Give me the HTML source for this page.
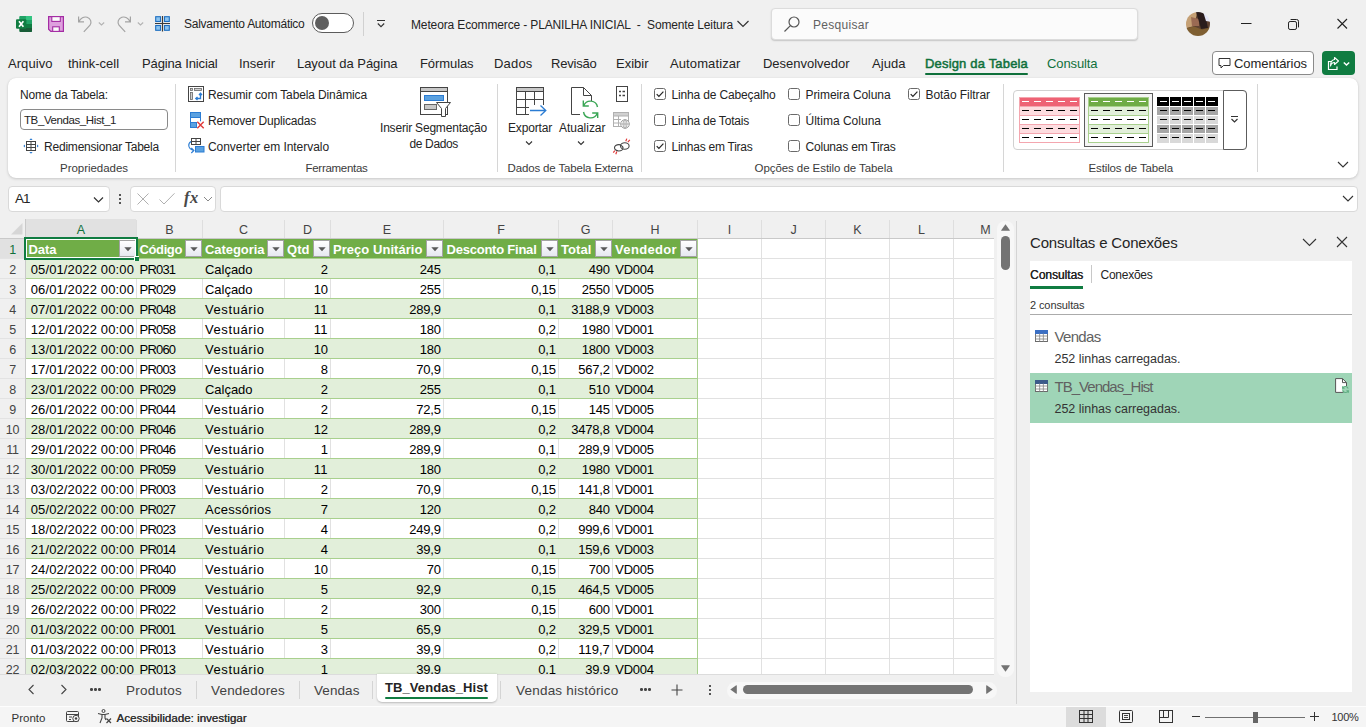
<!DOCTYPE html>
<html lang="pt-BR"><head><meta charset="utf-8"><title>Meteora Ecommerce - PLANILHA INICIAL - Excel</title>
<style>
html,body{margin:0;padding:0;}
body{width:1366px;height:727px;overflow:hidden;background:#f0f0f0;position:relative;font-family:"Liberation Sans",sans-serif;}
.t{position:absolute;white-space:nowrap;}
.b{position:absolute;box-sizing:border-box;}
svg{position:absolute;overflow:visible;}
body .t{-webkit-font-smoothing:auto;}
.c{font-family:"Liberation Sans",sans-serif;}
</style></head><body>
<svg style="left:16px;top:16px" width="16" height="16" viewBox="0 0 16 16">
<rect x="3.500" y="0" width="12.500" height="16" rx="1" fill="#21a366"/>
<rect x="9.700" y="0" width="6.300" height="4" fill="#33c481"/>
<path d="M3.500 1 Q3.500 0 4.500 0 H9.700 V4 H3.500 Z" fill="#21a366"/>
<rect x="9.700" y="4" width="6.300" height="4" fill="#21a366"/>
<rect x="3.500" y="4" width="6.200" height="4" fill="#107c41"/>
<rect x="9.700" y="8" width="6.300" height="4" fill="#107c41"/>
<rect x="3.500" y="8" width="6.200" height="4" fill="#185c37"/>
<path d="M3.500 12 H16 V15 Q16 16 15 16 H4.500 Q3.500 16 3.500 15 Z" fill="#185c37"/>
<rect x="0" y="3.200" width="10.400" height="9.600" rx="1" fill="#107c41"/>
<path d="M3 5.300 L7.400 10.700 M7.400 5.300 L3 10.700" stroke="#fff" stroke-width="1.700" fill="none"/>
</svg>
<svg style="left:48px;top:16px" width="16" height="16" viewBox="0 0 16 16">
<path d="M0.600 0.600 H15.400 V15.400 H2.800 L0.600 13.200 Z" fill="#dea0de" stroke="#a32ba3" stroke-width="1.200"/>
<rect x="3.800" y="0.600" width="8.500" height="4.800" fill="#fbfbfb" stroke="#a32ba3" stroke-width="1.100"/>
<rect x="4.700" y="10.800" width="6.600" height="4.600" fill="#fbfbfb" stroke="#a32ba3" stroke-width="1.100"/>
</svg>
<svg style="left:77px;top:15px" width="30" height="18" viewBox="0 0 30 18">
<path d="M1.600 1.500 V6.800 H7 M2 6.500 C3.500 3 7 1.300 10.200 2.300 C13.800 3.500 15 7.400 13 10.200 L6.800 16.800" fill="none" stroke="#a3a3a3" stroke-width="1.200"/>
<path d="M21.800 7.500 L24.500 10 L27.200 7.500" fill="none" stroke="#b3b3b3" stroke-width="1.100"/>
</svg>
<svg style="left:116px;top:15px" width="30" height="18" viewBox="0 0 30 18">
<path d="M14.400 1.500 V6.800 H9 M14 6.500 C12.500 3 9 1.300 5.800 2.300 C2.200 3.500 1 7.400 3 10.200 L9.200 16.800" fill="none" stroke="#a3a3a3" stroke-width="1.200"/>
<path d="M21.800 7.500 L24.500 10 L27.200 7.500" fill="none" stroke="#b3b3b3" stroke-width="1.100"/>
</svg>
<svg style="left:155px;top:16px" width="16" height="16" viewBox="0 0 16 16">
<g fill="#8cc4f0" stroke="#1e6fc0" stroke-width="1.100">
<rect x="0.700" y="0.700" width="4.800" height="4.800"/><rect x="9.500" y="0.700" width="4.800" height="4.800"/>
<rect x="0.700" y="9.500" width="4.800" height="4.800"/><rect x="9.500" y="9.500" width="4.800" height="4.800"/></g>
<path d="M7.500 0 V15.500 M0 7.500 H15" stroke="#3b3b3b" stroke-width="1.200"/>
</svg>
<div class="t " style="left:184px;top:15.84px;font-size:12px;line-height:16px;color:#242424;letter-spacing:-0.265px;">Salvamento Automático</div>
<div class="b" style="left:312px;top:13px;width:42px;height:20px;border:1.3px solid #5c5c5c;border-radius:10px;background:#fff;"></div>
<div class="b" style="left:315px;top:16px;width:14px;height:14px;border-radius:50%;background:#5f5f5f;"></div>
<div class="b" style="left:363px;top:12px;width:1px;height:24px;background:#d1d1d1;"></div>
<svg style="left:376px;top:19px" width="10" height="10" viewBox="0 0 10 10">
<path d="M1 1.5 H9 M1.8 4.5 L5 7.7 L8.2 4.5" fill="none" stroke="#333" stroke-width="1.1"/></svg>
<div class="t " style="left:411px;top:16.84px;font-size:12px;line-height:16px;color:#242424;letter-spacing:-0.137px;white-space:pre;">Meteora Ecommerce - PLANILHA INICIAL  -  Somente Leitura</div>
<svg style="left:736px;top:19px" width="14" height="10" viewBox="0 0 14 10">
<path d="M1.5 2 L7 7.5 L12.5 2" fill="none" stroke="#333" stroke-width="1.2"/></svg>
<div class="b" style="left:771px;top:8px;width:367px;height:32px;background:#fbfbfb;border:1px solid #dcdcdc;border-radius:4px;box-shadow:0 1px 1.5px rgba(0,0,0,.18);"></div>
<svg style="left:783px;top:15px" width="18" height="18" viewBox="0 0 18 18">
<circle cx="11" cy="7" r="5" fill="none" stroke="#555" stroke-width="1.2"/><path d="M7.4 10.6 L1.5 16.5" stroke="#555" stroke-width="1.2"/></svg>
<div class="t " style="left:813px;top:16.84px;font-size:12px;line-height:16px;color:#616161;letter-spacing:0.293px;">Pesquisar</div>
<svg style="left:1186px;top:12px" width="24" height="24" viewBox="0 0 24 24">
<defs><clipPath id="av"><circle cx="12" cy="12" r="12"/></clipPath><filter id="bl" x="-20%" y="-20%" width="140%" height="140%"><feGaussianBlur stdDeviation="0.6"/></filter></defs>
<g clip-path="url(#av)"><g filter="url(#bl)"><rect x="-3" y="-3" width="30" height="30" fill="#5f4330"/>
<path d="M-3 -3 H12 L8 14 L-3 17 Z" fill="#c5a074"/>
<path d="M5 5 L13 7 L13 14 L6 14 Z" fill="#9a6b52"/>
<path d="M9 -3 H18 L22 16 L15 17 L12.500 8 Z" fill="#2c1f1d"/>
<path d="M17.500 1 L26 1 L26 10 L20 9 Z" fill="#e4e6f6"/>
<path d="M-3 17 L8 14.500 L16 17.500 L27 15 V27 H-3 Z" fill="#7f5e30"/>
</g></g></svg>
<svg style="left:1238px;top:16px" width="112" height="16" viewBox="0 0 112 16">
<path d="M3 7.5 H13.5" stroke="#222" stroke-width="1"/>
<rect x="50.5" y="5.5" width="8" height="8" rx="1.6" fill="none" stroke="#222" stroke-width="1"/>
<path d="M52.6 3.5 H58.6 Q60.5 3.5 60.5 5.4 V11.4" fill="none" stroke="#222" stroke-width="1"/>
<path d="M99.5 3 L109 12.5 M109 3 L99.5 12.5" stroke="#222" stroke-width="1.1"/>
</svg>
<div class="t " style="left:8px;top:54.5px;font-size:13px;line-height:18px;color:#242424;letter-spacing:0.061px;">Arquivo</div>
<div class="t " style="left:68px;top:54.5px;font-size:13px;line-height:18px;color:#242424;letter-spacing:-0.029px;">think-cell</div>
<div class="t " style="left:142px;top:54.5px;font-size:13px;line-height:18px;color:#242424;letter-spacing:-0.130px;">Página Inicial</div>
<div class="t " style="left:239px;top:54.5px;font-size:13px;line-height:18px;color:#242424;letter-spacing:-0.017px;">Inserir</div>
<div class="t " style="left:297px;top:54.5px;font-size:13px;line-height:18px;color:#242424;letter-spacing:-0.043px;">Layout da Página</div>
<div class="t " style="left:420px;top:54.5px;font-size:13px;line-height:18px;color:#242424;letter-spacing:-0.084px;">Fórmulas</div>
<div class="t " style="left:494px;top:54.5px;font-size:13px;line-height:18px;color:#242424;letter-spacing:0.185px;">Dados</div>
<div class="t " style="left:551px;top:54.5px;font-size:13px;line-height:18px;color:#242424;letter-spacing:-0.209px;">Revisão</div>
<div class="t " style="left:616px;top:54.5px;font-size:13px;line-height:18px;color:#242424;letter-spacing:-0.001px;">Exibir</div>
<div class="t " style="left:670px;top:54.5px;font-size:13px;line-height:18px;color:#242424;letter-spacing:0.104px;">Automatizar</div>
<div class="t " style="left:763px;top:54.5px;font-size:13px;line-height:18px;color:#242424;letter-spacing:-0.016px;">Desenvolvedor</div>
<div class="t " style="left:872px;top:54.5px;font-size:13px;line-height:18px;color:#242424;letter-spacing:0.050px;">Ajuda</div>
<div class="t " style="left:925px;top:54.5px;font-size:13px;line-height:18px;color:#0f703b;letter-spacing:0.174px;-webkit-text-stroke:0.5px #0f703b;">Design da Tabela</div>
<div class="b" style="left:925px;top:73px;width:103px;height:2px;background:#0f703b;border-radius:1px;"></div>
<div class="t " style="left:1047px;top:54.5px;font-size:13px;line-height:18px;color:#0f703b;letter-spacing:-0.101px;">Consulta</div>
<div class="b" style="left:1212px;top:51px;width:101.5px;height:24px;background:#fff;border:1px solid #8a8a8a;border-radius:4px;"></div>
<svg style="left:1218px;top:57px" width="13" height="13" viewBox="0 0 13 13">
<path d="M1 1.5 H12 V8.5 H5.5 L3 11 V8.5 H1 Z" fill="none" stroke="#333" stroke-width="1"/></svg>
<div class="t " style="left:1234px;top:54.5px;font-size:13px;line-height:18px;color:#242424;letter-spacing:-0.063px;">Comentários</div>
<div class="b" style="left:1322px;top:51px;width:32.5px;height:24px;background:#107c41;border-radius:4px;"></div>
<svg style="left:1327px;top:56px" width="24" height="15" viewBox="0 0 24 15">
<path d="M4 5.500 H1.500 V13.500 H10 V10.500" fill="none" stroke="#fff" stroke-width="1.200"/>
<path d="M7.500 1.500 L11.500 5 L7.500 8.500 V6.500 Q4.500 6.500 3.500 10 Q3.500 4 7.500 3.500 Z" fill="none" stroke="#fff" stroke-width="1.100" stroke-linejoin="round"/>
<path d="M16.800 6.500 L19.500 9 L22.200 6.500" fill="none" stroke="#fff" stroke-width="1.500"/></svg>
<div class="b" style="left:8px;top:78px;width:1350px;height:100px;background:#fff;border-radius:8px;box-shadow:0 1px 3px rgba(0,0,0,.16),0 0 1px rgba(0,0,0,.10);"></div>
<div class="b" style="left:175px;top:84px;width:1px;height:88px;background:#d6d6d6;"></div>
<div class="b" style="left:497px;top:84px;width:1px;height:88px;background:#d6d6d6;"></div>
<div class="b" style="left:641px;top:84px;width:1px;height:88px;background:#d6d6d6;"></div>
<div class="b" style="left:1003px;top:84px;width:1px;height:88px;background:#d6d6d6;"></div>
<div class="b" style="left:1257px;top:84px;width:1px;height:88px;background:#d6d6d6;"></div>
<div class="t " style="left:20px;top:86.84px;font-size:12px;line-height:16px;color:#242424;letter-spacing:-0.166px;">Nome da Tabela:</div>
<div class="b" style="left:20px;top:109px;width:148px;height:21px;background:#fff;border:1px solid #8a8a8a;border-radius:4px;"></div>
<div class="t " style="left:24px;top:112.02px;font-size:11.5px;line-height:16px;color:#242424;letter-spacing:-0.403px;">TB_Vendas_Hist_1</div>
<svg style="left:23px;top:138px" width="16" height="16" viewBox="0 0 16 16">
<rect x="3.5" y="3.5" width="9" height="9" fill="#fff" stroke="#444" stroke-width="1"/>
<path d="M3.5 6.5 H12.5 M3.5 9.5 H12.5 M8 3.5 V12.5" stroke="#444" stroke-width="1"/>
<path d="M8 0.3 L9.6 2 H6.4 Z M8 15.7 L9.6 14 H6.4 Z M0.3 8 L2 6.4 V9.6 Z M15.7 8 L14 6.4 V9.6 Z" fill="#2b7cd3"/>
</svg>
<div class="t " style="left:44px;top:138.84px;font-size:12px;line-height:16px;color:#242424;letter-spacing:-0.209px;">Redimensionar Tabela</div>
<div class="t " style="left:60px;top:159.52px;font-size:11.5px;line-height:16px;color:#3b3b3b;letter-spacing:-0.033px;">Propriedades</div>
<svg style="left:188px;top:86px" width="16" height="16" viewBox="0 0 16 16">
<rect x="0.5" y="0.5" width="15" height="15" fill="#fff" stroke="#444"/>
<rect x="2.500" y="2.500" width="2" height="2" fill="#d0d0d0" stroke="#666" stroke-width="0.8"/>
<rect x="6.500" y="2.500" width="7" height="2" fill="#d0d0d0" stroke="#666" stroke-width="0.8"/>
<rect x="2.500" y="6.500" width="2" height="7" fill="#d0d0d0" stroke="#666" stroke-width="0.8"/>
<path d="M8 12.500 H12.500 V7.500 M11 9 L12.500 7.300 L14 9 M9.500 11 L7.800 12.500 L9.500 14" fill="none" stroke="#2b7cd3" stroke-width="1.300"/>
</svg>
<div class="t " style="left:208px;top:86.84px;font-size:12px;line-height:16px;color:#242424;letter-spacing:-0.129px;">Resumir com Tabela Dinâmica</div>
<svg style="left:189px;top:112px" width="17" height="17" viewBox="0 0 17 17">
<rect x="1.500" y="0.500" width="10" height="15" fill="#fff" stroke="#2b7cd3"/>
<rect x="1.500" y="0.500" width="10" height="5" fill="#5ba1e0" stroke="#2b7cd3"/>
<rect x="1.500" y="10.500" width="6" height="5" fill="#5ba1e0" stroke="#2b7cd3"/>
<rect x="8" y="9.300" width="5" height="7.500" fill="#fff"/>
<path d="M8.300 9.800 L14.700 16.200 M14.700 9.800 L8.300 16.200" stroke="#e03a3a" stroke-width="1.400"/>
</svg>
<div class="t " style="left:208px;top:112.84px;font-size:12px;line-height:16px;color:#242424;letter-spacing:-0.188px;">Remover Duplicadas</div>
<svg style="left:188px;top:138px" width="17" height="17" viewBox="0 0 17 17">
<rect x="3.500" y="0.500" width="9" height="6" fill="#fff" stroke="#444"/>
<path d="M3.500 3.500 H12.500 M8 0.500 V6.500" stroke="#444"/>
<rect x="7.500" y="8.500" width="8.500" height="5.500" fill="#5ba1e0" stroke="#2b7cd3"/>
<path d="M3 3.500 C-0.300 5.500 -0.300 10.500 5.300 12.400 M3.300 10 L5.900 12.500 L3.300 15" fill="none" stroke="#2b7cd3" stroke-width="1.100"/>
</svg>
<div class="t " style="left:208px;top:138.84px;font-size:12px;line-height:16px;color:#242424;letter-spacing:-0.047px;">Converter em Intervalo</div>
<div class="t " style="left:305.5px;top:159.52px;font-size:11.5px;line-height:16px;color:#3b3b3b;letter-spacing:-0.289px;">Ferramentas</div>
<svg style="left:419px;top:86px" width="32" height="32" viewBox="0 0 32 32">
<rect x="1.5" y="1.5" width="27" height="27" fill="#fff" stroke="#444"/>
<rect x="1.5" y="1.5" width="27" height="4" fill="#c8c8c8" stroke="#444"/>
<rect x="5.500" y="9.500" width="19" height="5" fill="#5ba1e0" stroke="#2b7cd3"/>
<rect x="5.500" y="18.500" width="12" height="5" fill="#c8c8c8" stroke="#666"/>
<path d="M17.500 16.500 H31.500 L26.500 22.500 V30.500 L22.500 30.500 V22.500 Z" fill="#fff" stroke="#444"/>
</svg>
<div class="t " style="left:380px;top:119.84px;font-size:12px;line-height:16px;color:#242424;letter-spacing:-0.196px;">Inserir Segmentação</div>
<div class="t " style="left:409.5px;top:135.84px;font-size:12px;line-height:16px;color:#242424;letter-spacing:-0.358px;">de Dados</div>
<svg style="left:514px;top:86px" width="34" height="32" viewBox="0 0 34 32">
<rect x="2.500" y="1.500" width="27" height="27" fill="#fff" stroke="#444"/>
<rect x="2.500" y="1.500" width="27" height="4" fill="#c8c8c8" stroke="#444"/>
<path d="M2.500 13.500 H29.500 M2.500 21.500 H29.500 M11.500 5.500 V28.500 M20.500 5.500 V28.500" stroke="#444"/>
<rect x="15" y="19" width="19" height="12" fill="#fff"/>
<path d="M16 24.500 H31.500 M26.500 19.500 L31.800 24.500 L26.500 29.500" fill="none" stroke="#2b7cd3" stroke-width="1.3"/>
</svg>
<div class="t " style="left:508px;top:119.84px;font-size:12px;line-height:16px;color:#242424;letter-spacing:-0.169px;">Exportar</div>
<svg style="left:525px;top:140px" width="8" height="6" viewBox="0 0 8 6"><path d="M1 1.5 L4 4.5 L7 1.5" fill="none" stroke="#333" stroke-width="1.1"/></svg>
<svg style="left:569px;top:86px" width="32" height="32" viewBox="0 0 32 32">
<path d="M2.500 1.500 H14.500 L22.500 9.500 V15 M2.500 1.500 V28.500 H11" fill="none" stroke="#444"/>
<path d="M14.500 1.500 V9.500 H22.500" fill="none" stroke="#444"/>
<path d="M28.500 21 A7.200 7.200 0 0 0 14.800 19.500 M14.300 14.500 V20 H19.800 M14.500 26 A7.200 7.200 0 0 0 28.200 27.500 M28.700 32 V27 H23.200" fill="none" stroke="#3aa655" stroke-width="1.400"/>
</svg>
<div class="t " style="left:559px;top:119.84px;font-size:12px;line-height:16px;color:#242424;letter-spacing:-0.021px;">Atualizar</div>
<svg style="left:577px;top:140px" width="8" height="6" viewBox="0 0 8 6"><path d="M1 1.5 L4 4.5 L7 1.5" fill="none" stroke="#333" stroke-width="1.1"/></svg>
<svg style="left:614px;top:86px" width="16" height="16" viewBox="0 0 16 16">
<rect x="2.5" y="0.5" width="11" height="15" fill="#fff" stroke="#444"/>
<path d="M5 5.500 H7 M8.500 5.500 H11 M5 9.500 H7 M8.500 9.500 H11" stroke="#444" stroke-width="1.6"/></svg>
<svg style="left:613px;top:112px" width="17" height="17" viewBox="0 0 17 17">
<rect x="0.500" y="0.500" width="15" height="14" fill="#fff" stroke="#b0b0b0"/>
<rect x="0.5" y="0.5" width="15" height="3.500" fill="#d0d0d0" stroke="#b0b0b0"/>
<path d="M0.500 7.500 H8 M0.500 11 H7 M5.500 4 V14.500" stroke="#b0b0b0"/>
<circle cx="12" cy="12" r="4.3" fill="#fff" stroke="#a0a0a0"/><path d="M7.700 12 H16.300 M12 7.700 V16.300" stroke="#a0a0a0" stroke-width="0.8"/><ellipse cx="12" cy="12" rx="2" ry="4.300" fill="none" stroke="#a0a0a0" stroke-width="0.8"/></svg>
<svg style="left:613px;top:138px" width="18" height="17" viewBox="0 0 18 17">
<ellipse cx="5.800" cy="9.800" rx="4.300" ry="3.200" fill="none" stroke="#444" stroke-width="1.1"/>
<ellipse cx="11.800" cy="8" rx="4.300" ry="3.200" fill="#fff" stroke="#444" stroke-width="1.1"/>
<path d="M7.500 7.200 A4.300 3.200 0 0 1 10 10.500" fill="none" stroke="#444" stroke-width="1.1"/>
<path d="M12.800 3.300 L13.800 0.600 M14.800 4.200 L16.800 1.800 M3.800 13.500 L2.800 16.200 M1.800 12.600 L0.300 14.600" stroke="#e03a3a" stroke-width="1.200"/></svg>
<div class="t " style="left:507.5px;top:159.52px;font-size:11.5px;line-height:16px;color:#3b3b3b;letter-spacing:-0.149px;">Dados de Tabela Externa</div>
<div class="b" style="left:653.5px;top:87.7px;width:12.7px;height:12.7px;background:#fff;border:1px solid #6a6a6a;border-radius:2.5px;"></div>
<svg style="left:654px;top:88px" width="12" height="12" viewBox="0 0 12 12"><path d="M2.7 6.2 L4.9 8.4 L9.4 3.6" fill="none" stroke="#242424" stroke-width="1.2"/></svg>
<div class="t " style="left:671.5px;top:86.84px;font-size:12px;line-height:16px;color:#242424;letter-spacing:-0.152px;">Linha de Cabeçalho</div>
<div class="b" style="left:653.5px;top:113.7px;width:12.7px;height:12.7px;background:#fff;border:1px solid #6a6a6a;border-radius:2.5px;"></div>
<div class="t " style="left:671.5px;top:112.84px;font-size:12px;line-height:16px;color:#242424;letter-spacing:-0.200px;">Linha de Totais</div>
<div class="b" style="left:653.5px;top:139.7px;width:12.7px;height:12.7px;background:#fff;border:1px solid #6a6a6a;border-radius:2.5px;"></div>
<svg style="left:654px;top:140px" width="12" height="12" viewBox="0 0 12 12"><path d="M2.7 6.2 L4.9 8.4 L9.4 3.6" fill="none" stroke="#242424" stroke-width="1.2"/></svg>
<div class="t " style="left:671.5px;top:138.84px;font-size:12px;line-height:16px;color:#242424;letter-spacing:-0.247px;">Linhas em Tiras</div>
<div class="b" style="left:787.5px;top:87.7px;width:12.7px;height:12.7px;background:#fff;border:1px solid #6a6a6a;border-radius:2.5px;"></div>
<div class="t " style="left:805.5px;top:86.84px;font-size:12px;line-height:16px;color:#242424;letter-spacing:-0.069px;">Primeira Coluna</div>
<div class="b" style="left:787.5px;top:113.7px;width:12.7px;height:12.7px;background:#fff;border:1px solid #6a6a6a;border-radius:2.5px;"></div>
<div class="t " style="left:805.5px;top:112.84px;font-size:12px;line-height:16px;color:#242424;letter-spacing:0.011px;">Última Coluna</div>
<div class="b" style="left:787.5px;top:139.7px;width:12.7px;height:12.7px;background:#fff;border:1px solid #6a6a6a;border-radius:2.5px;"></div>
<div class="t " style="left:805.5px;top:138.84px;font-size:12px;line-height:16px;color:#242424;letter-spacing:-0.210px;">Colunas em Tiras</div>
<div class="b" style="left:907.5px;top:87.7px;width:12.7px;height:12.7px;background:#fff;border:1px solid #6a6a6a;border-radius:2.5px;"></div>
<svg style="left:908px;top:88px" width="12" height="12" viewBox="0 0 12 12"><path d="M2.7 6.2 L4.9 8.4 L9.4 3.6" fill="none" stroke="#242424" stroke-width="1.2"/></svg>
<div class="t " style="left:925.5px;top:86.84px;font-size:12px;line-height:16px;color:#242424;letter-spacing:-0.065px;">Botão Filtrar</div>
<div class="t " style="left:754.5px;top:159.52px;font-size:11.5px;line-height:16px;color:#3b3b3b;letter-spacing:-0.069px;">Opções de Estilo de Tabela</div>
<div class="b" style="left:1013px;top:90px;width:234px;height:60px;background:#fff;border:1px solid #d1d1d1;border-radius:4px;"></div>
<div class="b" style="left:1223px;top:90px;width:24px;height:60px;background:#fff;border:1px solid #5c5c5c;border-radius:0 4px 4px 0;"></div>
<svg style="left:1230px;top:115px" width="9" height="9" viewBox="0 0 9 9"><path d="M1 1.500 H8 M1.500 4 L4.500 7 L7.500 4" fill="none" stroke="#333" stroke-width="1.2"/></svg>
<svg style="left:1019px;top:97px" width="61" height="46" viewBox="0 0 61 46" shape-rendering="crispEdges"><rect x="0" y="0" width="61" height="9" fill="#ee6274"/><rect x="0" y="9" width="61" height="9" fill="#fddde0"/><rect x="0" y="18" width="61" height="9" fill="#ffffff"/><rect x="0" y="27" width="61" height="9" fill="#fddde0"/><rect x="0" y="36" width="61" height="10" fill="#ffffff"/><rect x="0" y="9" width="61" height="1" fill="#f4a6af"/><rect x="0" y="18" width="61" height="1" fill="#f4a6af"/><rect x="0" y="27" width="61" height="1" fill="#f4a6af"/><rect x="0" y="36" width="61" height="1" fill="#f4a6af"/><rect x="0" y="0" width="61" height="1" fill="#f4a6af"/><rect x="0" y="45" width="61" height="1" fill="#f4a6af"/><rect x="0" y="0" width="1" height="46" fill="#f4a6af"/><rect x="60" y="0" width="1" height="46" fill="#f4a6af"/><rect x="3" y="4" width="7" height="1" fill="#fff"/><rect x="15" y="4" width="7" height="1" fill="#fff"/><rect x="27" y="4" width="7" height="1" fill="#fff"/><rect x="39" y="4" width="7" height="1" fill="#fff"/><rect x="51" y="4" width="7" height="1" fill="#fff"/><rect x="3" y="13" width="7" height="1" fill="#000"/><rect x="15" y="13" width="7" height="1" fill="#000"/><rect x="27" y="13" width="7" height="1" fill="#000"/><rect x="39" y="13" width="7" height="1" fill="#000"/><rect x="51" y="13" width="7" height="1" fill="#000"/><rect x="3" y="22" width="7" height="1" fill="#000"/><rect x="15" y="22" width="7" height="1" fill="#000"/><rect x="27" y="22" width="7" height="1" fill="#000"/><rect x="39" y="22" width="7" height="1" fill="#000"/><rect x="51" y="22" width="7" height="1" fill="#000"/><rect x="3" y="31" width="7" height="1" fill="#000"/><rect x="15" y="31" width="7" height="1" fill="#000"/><rect x="27" y="31" width="7" height="1" fill="#000"/><rect x="39" y="31" width="7" height="1" fill="#000"/><rect x="51" y="31" width="7" height="1" fill="#000"/><rect x="3" y="40" width="7" height="1" fill="#000"/><rect x="15" y="40" width="7" height="1" fill="#000"/><rect x="27" y="40" width="7" height="1" fill="#000"/><rect x="39" y="40" width="7" height="1" fill="#000"/><rect x="51" y="40" width="7" height="1" fill="#000"/></svg>
<div class="b" style="left:1084px;top:93px;width:69px;height:54px;background:#f5f5f5;border:1px solid #5c5c5c;"></div>
<svg style="left:1088px;top:97px" width="61" height="46" viewBox="0 0 61 46" shape-rendering="crispEdges"><rect x="0" y="0" width="61" height="9" fill="#6fac46"/><rect x="0" y="9" width="61" height="9" fill="#e2efda"/><rect x="0" y="18" width="61" height="9" fill="#ffffff"/><rect x="0" y="27" width="61" height="9" fill="#e2efda"/><rect x="0" y="36" width="61" height="10" fill="#ffffff"/><rect x="0" y="9" width="61" height="1" fill="#a9d08e"/><rect x="0" y="18" width="61" height="1" fill="#a9d08e"/><rect x="0" y="27" width="61" height="1" fill="#a9d08e"/><rect x="0" y="36" width="61" height="1" fill="#a9d08e"/><rect x="0" y="0" width="61" height="1" fill="#a9d08e"/><rect x="0" y="45" width="61" height="1" fill="#a9d08e"/><rect x="0" y="0" width="1" height="46" fill="#a9d08e"/><rect x="60" y="0" width="1" height="46" fill="#a9d08e"/><rect x="3" y="4" width="7" height="1" fill="#fff"/><rect x="15" y="4" width="7" height="1" fill="#fff"/><rect x="27" y="4" width="7" height="1" fill="#fff"/><rect x="39" y="4" width="7" height="1" fill="#fff"/><rect x="51" y="4" width="7" height="1" fill="#fff"/><rect x="3" y="13" width="7" height="1" fill="#000"/><rect x="15" y="13" width="7" height="1" fill="#000"/><rect x="27" y="13" width="7" height="1" fill="#000"/><rect x="39" y="13" width="7" height="1" fill="#000"/><rect x="51" y="13" width="7" height="1" fill="#000"/><rect x="3" y="22" width="7" height="1" fill="#000"/><rect x="15" y="22" width="7" height="1" fill="#000"/><rect x="27" y="22" width="7" height="1" fill="#000"/><rect x="39" y="22" width="7" height="1" fill="#000"/><rect x="51" y="22" width="7" height="1" fill="#000"/><rect x="3" y="31" width="7" height="1" fill="#000"/><rect x="15" y="31" width="7" height="1" fill="#000"/><rect x="27" y="31" width="7" height="1" fill="#000"/><rect x="39" y="31" width="7" height="1" fill="#000"/><rect x="51" y="31" width="7" height="1" fill="#000"/><rect x="3" y="40" width="7" height="1" fill="#000"/><rect x="15" y="40" width="7" height="1" fill="#000"/><rect x="27" y="40" width="7" height="1" fill="#000"/><rect x="39" y="40" width="7" height="1" fill="#000"/><rect x="51" y="40" width="7" height="1" fill="#000"/></svg>
<svg style="left:1157px;top:97px" width="61" height="46" viewBox="0 0 61 46" shape-rendering="crispEdges"><rect x="0" y="0" width="61" height="9" fill="#000000"/><rect x="0" y="9" width="61" height="9" fill="#a6a6a6"/><rect x="0" y="18" width="61" height="9" fill="#d9d9d9"/><rect x="0" y="27" width="61" height="9" fill="#a6a6a6"/><rect x="0" y="36" width="61" height="10" fill="#d9d9d9"/><rect x="0" y="9" width="61" height="1" fill="#fff"/><rect x="0" y="18" width="61" height="1" fill="#fff"/><rect x="0" y="27" width="61" height="1" fill="#fff"/><rect x="0" y="36" width="61" height="1" fill="#fff"/><rect x="12" y="0" width="1" height="46" fill="#fff"/><rect x="24" y="0" width="1" height="46" fill="#fff"/><rect x="36" y="0" width="1" height="46" fill="#fff"/><rect x="48" y="0" width="1" height="46" fill="#fff"/><rect x="3" y="4" width="7" height="1" fill="#fff"/><rect x="15" y="4" width="7" height="1" fill="#fff"/><rect x="27" y="4" width="7" height="1" fill="#fff"/><rect x="39" y="4" width="7" height="1" fill="#fff"/><rect x="51" y="4" width="7" height="1" fill="#fff"/><rect x="3" y="13" width="7" height="1" fill="#000"/><rect x="15" y="13" width="7" height="1" fill="#000"/><rect x="27" y="13" width="7" height="1" fill="#000"/><rect x="39" y="13" width="7" height="1" fill="#000"/><rect x="51" y="13" width="7" height="1" fill="#000"/><rect x="3" y="22" width="7" height="1" fill="#000"/><rect x="15" y="22" width="7" height="1" fill="#000"/><rect x="27" y="22" width="7" height="1" fill="#000"/><rect x="39" y="22" width="7" height="1" fill="#000"/><rect x="51" y="22" width="7" height="1" fill="#000"/><rect x="3" y="31" width="7" height="1" fill="#000"/><rect x="15" y="31" width="7" height="1" fill="#000"/><rect x="27" y="31" width="7" height="1" fill="#000"/><rect x="39" y="31" width="7" height="1" fill="#000"/><rect x="51" y="31" width="7" height="1" fill="#000"/><rect x="3" y="40" width="7" height="1" fill="#000"/><rect x="15" y="40" width="7" height="1" fill="#000"/><rect x="27" y="40" width="7" height="1" fill="#000"/><rect x="39" y="40" width="7" height="1" fill="#000"/><rect x="51" y="40" width="7" height="1" fill="#000"/></svg>
<div class="t " style="left:1088.5px;top:159.52px;font-size:11.5px;line-height:16px;color:#3b3b3b;letter-spacing:-0.131px;">Estilos de Tabela</div>
<svg style="left:1337px;top:160px" width="12" height="9" viewBox="0 0 12 9"><path d="M1 2 L6 7 L11 2" fill="none" stroke="#333" stroke-width="1.1"/></svg>
<div class="b" style="left:8px;top:186px;width:102px;height:26px;background:#fff;border:1px solid #d9d9d9;border-radius:4px;"></div>
<div class="t " style="left:15px;top:190.32px;font-size:13.5px;line-height:18px;color:#242424;letter-spacing:-1.006px;">A1</div>
<svg style="left:93px;top:196px" width="11" height="8" viewBox="0 0 11 8"><path d="M1 1.500 L5.500 6 L10 1.500" fill="none" stroke="#333" stroke-width="1.2"/></svg>
<div class="b" style="left:118.7px;top:193.5px;width:2.5px;height:2.5px;background:#222;border-radius:1px;"></div>
<div class="b" style="left:118.7px;top:197.6px;width:2.5px;height:2.5px;background:#222;border-radius:1px;"></div>
<div class="b" style="left:118.7px;top:201.7px;width:2.5px;height:2.5px;background:#222;border-radius:1px;"></div>
<div class="b" style="left:130px;top:186px;width:86px;height:26px;background:#fff;border:1px solid #d9d9d9;border-radius:4px;"></div>
<svg style="left:136px;top:192px" width="80" height="14" viewBox="0 0 80 14">
<path d="M1.500 1.500 L12.500 12.500 M12.500 1.500 L1.500 12.500" stroke="#b0b0b0" stroke-width="1"/>
<path d="M23.500 7.500 L28 12 L38.500 1.300" fill="none" stroke="#b0b0b0" stroke-width="1"/>
<path d="M68 5 L72 9 L76 5" fill="none" stroke="#888" stroke-width="1"/></svg>
<div class="t" style="left:184px;top:188.300px;font-family:'Liberation Serif',serif;font-style:italic;font-weight:bold;font-size:16.500px;line-height:20px;color:#484848;letter-spacing:0.4px;">fx</div>
<div class="b" style="left:220px;top:186px;width:1138px;height:26px;background:#fff;border:1px solid #d9d9d9;border-radius:4px;"></div>
<svg style="left:1342px;top:194px" width="12" height="9" viewBox="0 0 12 9"><path d="M1 2 L6 7 L11 2" fill="none" stroke="#333" stroke-width="1.1"/></svg>
<div class="b" style="left:0px;top:219px;width:994px;height:459px;background:#fff;"></div>
<div class="b" style="left:0px;top:219px;width:994px;height:19px;background:#f0f0f0;"></div>
<div class="b" style="left:26px;top:219px;width:110px;height:19px;background:#e1e1e1;"></div>
<div class="b" style="left:0px;top:238px;width:994px;height:1px;background:#c9c9c9;"></div>
<div class="b" style="left:0px;top:239px;width:25px;height:439px;background:#f0f0f0;"></div>
<div class="b" style="left:0px;top:239px;width:25px;height:19px;background:#e1e1e1;"></div>
<div class="b" style="left:25px;top:219px;width:1px;height:459px;background:#c9c9c9;"></div>
<svg style="left:11px;top:223px" width="12" height="12" viewBox="0 0 12 12"><path d="M11.500 0 V11.500 H0 Z" fill="#d6d6d6"/></svg>
<div class="b" style="left:136px;top:220px;width:1px;height:18px;background:#dedede;"></div>
<div class="b" style="left:202px;top:220px;width:1px;height:18px;background:#dedede;"></div>
<div class="b" style="left:284px;top:220px;width:1px;height:18px;background:#dedede;"></div>
<div class="b" style="left:330px;top:220px;width:1px;height:18px;background:#dedede;"></div>
<div class="b" style="left:443px;top:220px;width:1px;height:18px;background:#dedede;"></div>
<div class="b" style="left:558px;top:220px;width:1px;height:18px;background:#dedede;"></div>
<div class="b" style="left:612px;top:220px;width:1px;height:18px;background:#dedede;"></div>
<div class="b" style="left:697px;top:220px;width:1px;height:18px;background:#dedede;"></div>
<div class="b" style="left:761px;top:220px;width:1px;height:18px;background:#dedede;"></div>
<div class="b" style="left:825px;top:220px;width:1px;height:18px;background:#dedede;"></div>
<div class="b" style="left:889px;top:220px;width:1px;height:18px;background:#dedede;"></div>
<div class="b" style="left:953px;top:220px;width:1px;height:18px;background:#dedede;"></div>
<div class="b" style="left:136px;top:239px;width:1px;height:439px;background:#e1e1e1;"></div>
<div class="b" style="left:202px;top:239px;width:1px;height:439px;background:#e1e1e1;"></div>
<div class="b" style="left:284px;top:239px;width:1px;height:439px;background:#e1e1e1;"></div>
<div class="b" style="left:330px;top:239px;width:1px;height:439px;background:#e1e1e1;"></div>
<div class="b" style="left:443px;top:239px;width:1px;height:439px;background:#e1e1e1;"></div>
<div class="b" style="left:558px;top:239px;width:1px;height:439px;background:#e1e1e1;"></div>
<div class="b" style="left:612px;top:239px;width:1px;height:439px;background:#e1e1e1;"></div>
<div class="b" style="left:697px;top:239px;width:1px;height:439px;background:#e1e1e1;"></div>
<div class="b" style="left:761px;top:239px;width:1px;height:439px;background:#e1e1e1;"></div>
<div class="b" style="left:825px;top:239px;width:1px;height:439px;background:#e1e1e1;"></div>
<div class="b" style="left:889px;top:239px;width:1px;height:439px;background:#e1e1e1;"></div>
<div class="b" style="left:953px;top:239px;width:1px;height:439px;background:#e1e1e1;"></div>
<div class="b" style="left:26px;top:258px;width:968px;height:1px;background:#e1e1e1;"></div>
<div class="b" style="left:0px;top:258px;width:25px;height:1px;background:#e3e3e3;"></div>
<div class="b" style="left:26px;top:278px;width:968px;height:1px;background:#e1e1e1;"></div>
<div class="b" style="left:0px;top:278px;width:25px;height:1px;background:#e3e3e3;"></div>
<div class="b" style="left:26px;top:298px;width:968px;height:1px;background:#e1e1e1;"></div>
<div class="b" style="left:0px;top:298px;width:25px;height:1px;background:#e3e3e3;"></div>
<div class="b" style="left:26px;top:318px;width:968px;height:1px;background:#e1e1e1;"></div>
<div class="b" style="left:0px;top:318px;width:25px;height:1px;background:#e3e3e3;"></div>
<div class="b" style="left:26px;top:338px;width:968px;height:1px;background:#e1e1e1;"></div>
<div class="b" style="left:0px;top:338px;width:25px;height:1px;background:#e3e3e3;"></div>
<div class="b" style="left:26px;top:358px;width:968px;height:1px;background:#e1e1e1;"></div>
<div class="b" style="left:0px;top:358px;width:25px;height:1px;background:#e3e3e3;"></div>
<div class="b" style="left:26px;top:378px;width:968px;height:1px;background:#e1e1e1;"></div>
<div class="b" style="left:0px;top:378px;width:25px;height:1px;background:#e3e3e3;"></div>
<div class="b" style="left:26px;top:398px;width:968px;height:1px;background:#e1e1e1;"></div>
<div class="b" style="left:0px;top:398px;width:25px;height:1px;background:#e3e3e3;"></div>
<div class="b" style="left:26px;top:418px;width:968px;height:1px;background:#e1e1e1;"></div>
<div class="b" style="left:0px;top:418px;width:25px;height:1px;background:#e3e3e3;"></div>
<div class="b" style="left:26px;top:438px;width:968px;height:1px;background:#e1e1e1;"></div>
<div class="b" style="left:0px;top:438px;width:25px;height:1px;background:#e3e3e3;"></div>
<div class="b" style="left:26px;top:458px;width:968px;height:1px;background:#e1e1e1;"></div>
<div class="b" style="left:0px;top:458px;width:25px;height:1px;background:#e3e3e3;"></div>
<div class="b" style="left:26px;top:478px;width:968px;height:1px;background:#e1e1e1;"></div>
<div class="b" style="left:0px;top:478px;width:25px;height:1px;background:#e3e3e3;"></div>
<div class="b" style="left:26px;top:498px;width:968px;height:1px;background:#e1e1e1;"></div>
<div class="b" style="left:0px;top:498px;width:25px;height:1px;background:#e3e3e3;"></div>
<div class="b" style="left:26px;top:518px;width:968px;height:1px;background:#e1e1e1;"></div>
<div class="b" style="left:0px;top:518px;width:25px;height:1px;background:#e3e3e3;"></div>
<div class="b" style="left:26px;top:538px;width:968px;height:1px;background:#e1e1e1;"></div>
<div class="b" style="left:0px;top:538px;width:25px;height:1px;background:#e3e3e3;"></div>
<div class="b" style="left:26px;top:558px;width:968px;height:1px;background:#e1e1e1;"></div>
<div class="b" style="left:0px;top:558px;width:25px;height:1px;background:#e3e3e3;"></div>
<div class="b" style="left:26px;top:578px;width:968px;height:1px;background:#e1e1e1;"></div>
<div class="b" style="left:0px;top:578px;width:25px;height:1px;background:#e3e3e3;"></div>
<div class="b" style="left:26px;top:598px;width:968px;height:1px;background:#e1e1e1;"></div>
<div class="b" style="left:0px;top:598px;width:25px;height:1px;background:#e3e3e3;"></div>
<div class="b" style="left:26px;top:618px;width:968px;height:1px;background:#e1e1e1;"></div>
<div class="b" style="left:0px;top:618px;width:25px;height:1px;background:#e3e3e3;"></div>
<div class="b" style="left:26px;top:638px;width:968px;height:1px;background:#e1e1e1;"></div>
<div class="b" style="left:0px;top:638px;width:25px;height:1px;background:#e3e3e3;"></div>
<div class="b" style="left:26px;top:658px;width:968px;height:1px;background:#e1e1e1;"></div>
<div class="b" style="left:0px;top:658px;width:25px;height:1px;background:#e3e3e3;"></div>
<div class="b" style="left:26px;top:678px;width:968px;height:1px;background:#e1e1e1;"></div>
<div class="b" style="left:0px;top:678px;width:25px;height:1px;background:#e3e3e3;"></div>
<div class="b" style="left:26px;top:239px;width:671px;height:19px;background:#70ad47;"></div>
<div class="b" style="left:26px;top:259px;width:671px;height:19px;background:#e2efda;"></div>
<div class="b" style="left:26px;top:278px;width:672px;height:1px;background:#a9d08e;"></div>
<div class="b" style="left:26px;top:298px;width:672px;height:1px;background:#a9d08e;"></div>
<div class="b" style="left:26px;top:299px;width:671px;height:19px;background:#e2efda;"></div>
<div class="b" style="left:26px;top:318px;width:672px;height:1px;background:#a9d08e;"></div>
<div class="b" style="left:26px;top:338px;width:672px;height:1px;background:#a9d08e;"></div>
<div class="b" style="left:26px;top:339px;width:671px;height:19px;background:#e2efda;"></div>
<div class="b" style="left:26px;top:358px;width:672px;height:1px;background:#a9d08e;"></div>
<div class="b" style="left:26px;top:378px;width:672px;height:1px;background:#a9d08e;"></div>
<div class="b" style="left:26px;top:379px;width:671px;height:19px;background:#e2efda;"></div>
<div class="b" style="left:26px;top:398px;width:672px;height:1px;background:#a9d08e;"></div>
<div class="b" style="left:26px;top:418px;width:672px;height:1px;background:#a9d08e;"></div>
<div class="b" style="left:26px;top:419px;width:671px;height:19px;background:#e2efda;"></div>
<div class="b" style="left:26px;top:438px;width:672px;height:1px;background:#a9d08e;"></div>
<div class="b" style="left:26px;top:458px;width:672px;height:1px;background:#a9d08e;"></div>
<div class="b" style="left:26px;top:459px;width:671px;height:19px;background:#e2efda;"></div>
<div class="b" style="left:26px;top:478px;width:672px;height:1px;background:#a9d08e;"></div>
<div class="b" style="left:26px;top:498px;width:672px;height:1px;background:#a9d08e;"></div>
<div class="b" style="left:26px;top:499px;width:671px;height:19px;background:#e2efda;"></div>
<div class="b" style="left:26px;top:518px;width:672px;height:1px;background:#a9d08e;"></div>
<div class="b" style="left:26px;top:538px;width:672px;height:1px;background:#a9d08e;"></div>
<div class="b" style="left:26px;top:539px;width:671px;height:19px;background:#e2efda;"></div>
<div class="b" style="left:26px;top:558px;width:672px;height:1px;background:#a9d08e;"></div>
<div class="b" style="left:26px;top:578px;width:672px;height:1px;background:#a9d08e;"></div>
<div class="b" style="left:26px;top:579px;width:671px;height:19px;background:#e2efda;"></div>
<div class="b" style="left:26px;top:598px;width:672px;height:1px;background:#a9d08e;"></div>
<div class="b" style="left:26px;top:618px;width:672px;height:1px;background:#a9d08e;"></div>
<div class="b" style="left:26px;top:619px;width:671px;height:19px;background:#e2efda;"></div>
<div class="b" style="left:26px;top:638px;width:672px;height:1px;background:#a9d08e;"></div>
<div class="b" style="left:26px;top:658px;width:672px;height:1px;background:#a9d08e;"></div>
<div class="b" style="left:26px;top:659px;width:671px;height:19px;background:#e2efda;"></div>
<div class="b" style="left:26px;top:678px;width:672px;height:1px;background:#a9d08e;"></div>
<div class="b" style="left:26px;top:258px;width:672px;height:1px;background:#a9d08e;"></div>
<div class="b" style="left:697px;top:239px;width:1px;height:439px;background:#a9d08e;"></div>
<div class="t " style="left:76.83px;top:222.17px;font-size:12.5px;line-height:17px;color:#0f703b;">A</div>
<div class="t " style="left:165.33px;top:222.17px;font-size:12.5px;line-height:17px;color:#444;">B</div>
<div class="t " style="left:238.99px;top:222.17px;font-size:12.5px;line-height:17px;color:#444;">C</div>
<div class="t " style="left:302.99px;top:222.17px;font-size:12.5px;line-height:17px;color:#444;">D</div>
<div class="t " style="left:382.83px;top:222.17px;font-size:12.5px;line-height:17px;color:#444;">E</div>
<div class="t " style="left:497.18px;top:222.17px;font-size:12.5px;line-height:17px;color:#444;">F</div>
<div class="t " style="left:580.64px;top:222.17px;font-size:12.5px;line-height:17px;color:#444;">G</div>
<div class="t " style="left:650.49px;top:222.17px;font-size:12.5px;line-height:17px;color:#444;">H</div>
<div class="t " style="left:727.76px;top:222.17px;font-size:12.5px;line-height:17px;color:#444;">I</div>
<div class="t " style="left:790.38px;top:222.17px;font-size:12.5px;line-height:17px;color:#444;">J</div>
<div class="t " style="left:853.33px;top:222.17px;font-size:12.5px;line-height:17px;color:#444;">K</div>
<div class="t " style="left:918.02px;top:222.17px;font-size:12.5px;line-height:17px;color:#444;">L</div>
<div class="b" style="left:954px;top:219px;width:40px;height:19px;overflow:hidden;"><div class="t" style="left:26.29px;top:3.17px;font-size:12.5px;line-height:17px;color:#444;">M</div></div>
<div class="t " style="left:9.17px;top:241.67px;font-size:12.5px;line-height:17px;color:#0f703b;letter-spacing:-0.3px;">1</div>
<div class="t " style="left:9.17px;top:261.67px;font-size:12.5px;line-height:17px;color:#444;letter-spacing:-0.3px;">2</div>
<div class="t " style="left:9.17px;top:281.67px;font-size:12.5px;line-height:17px;color:#444;letter-spacing:-0.3px;">3</div>
<div class="t " style="left:9.17px;top:301.67px;font-size:12.5px;line-height:17px;color:#444;letter-spacing:-0.3px;">4</div>
<div class="t " style="left:9.17px;top:321.67px;font-size:12.5px;line-height:17px;color:#444;letter-spacing:-0.3px;">5</div>
<div class="t " style="left:9.17px;top:341.67px;font-size:12.5px;line-height:17px;color:#444;letter-spacing:-0.3px;">6</div>
<div class="t " style="left:9.17px;top:361.67px;font-size:12.5px;line-height:17px;color:#444;letter-spacing:-0.3px;">7</div>
<div class="t " style="left:9.17px;top:381.67px;font-size:12.5px;line-height:17px;color:#444;letter-spacing:-0.3px;">8</div>
<div class="t " style="left:9.17px;top:401.67px;font-size:12.5px;line-height:17px;color:#444;letter-spacing:-0.3px;">9</div>
<div class="t " style="left:5.85px;top:421.67px;font-size:12.5px;line-height:17px;color:#444;letter-spacing:-0.3px;">10</div>
<div class="t " style="left:6.31px;top:441.67px;font-size:12.5px;line-height:17px;color:#444;letter-spacing:-0.3px;">11</div>
<div class="t " style="left:5.85px;top:461.67px;font-size:12.5px;line-height:17px;color:#444;letter-spacing:-0.3px;">12</div>
<div class="t " style="left:5.85px;top:481.67px;font-size:12.5px;line-height:17px;color:#444;letter-spacing:-0.3px;">13</div>
<div class="t " style="left:5.85px;top:501.67px;font-size:12.5px;line-height:17px;color:#444;letter-spacing:-0.3px;">14</div>
<div class="t " style="left:5.85px;top:521.67px;font-size:12.5px;line-height:17px;color:#444;letter-spacing:-0.3px;">15</div>
<div class="t " style="left:5.85px;top:541.67px;font-size:12.5px;line-height:17px;color:#444;letter-spacing:-0.3px;">16</div>
<div class="t " style="left:5.85px;top:561.67px;font-size:12.5px;line-height:17px;color:#444;letter-spacing:-0.3px;">17</div>
<div class="t " style="left:5.85px;top:581.67px;font-size:12.5px;line-height:17px;color:#444;letter-spacing:-0.3px;">18</div>
<div class="t " style="left:5.85px;top:601.67px;font-size:12.5px;line-height:17px;color:#444;letter-spacing:-0.3px;">19</div>
<div class="t " style="left:5.85px;top:621.67px;font-size:12.5px;line-height:17px;color:#444;letter-spacing:-0.3px;">20</div>
<div class="t " style="left:5.85px;top:641.67px;font-size:12.5px;line-height:17px;color:#444;letter-spacing:-0.3px;">21</div>
<div class="t " style="left:5.85px;top:661.67px;font-size:12.5px;line-height:17px;color:#444;letter-spacing:-0.3px;">22</div>
<div class="t " style="left:28.5px;top:240.5px;font-size:13px;line-height:18px;color:#fff;font-weight:bold;letter-spacing:-0.044px;">Data</div>
<div class="b" style="left:119px;top:240px;width:17px;height:17px;background:linear-gradient(#ffffff,#e6e8f0);border:1px solid #a3a3a3;"></div>
<svg style="left:123.5px;top:247px" width="8" height="5" viewBox="0 0 8 5"><path d="M0.300 0.200 H7.700 L4 4.200 Z" fill="#595959"/></svg>
<div class="t " style="left:139.5px;top:240.5px;font-size:13px;line-height:18px;color:#fff;font-weight:bold;letter-spacing:-0.377px;">Código</div>
<div class="b" style="left:185px;top:240px;width:17px;height:17px;background:linear-gradient(#ffffff,#e6e8f0);border:1px solid #a3a3a3;"></div>
<svg style="left:189.5px;top:247px" width="8" height="5" viewBox="0 0 8 5"><path d="M0.300 0.200 H7.700 L4 4.200 Z" fill="#595959"/></svg>
<div class="t " style="left:205px;top:240.5px;font-size:13px;line-height:18px;color:#fff;font-weight:bold;letter-spacing:-0.051px;">Categoria</div>
<div class="b" style="left:267px;top:240px;width:17px;height:17px;background:linear-gradient(#ffffff,#e6e8f0);border:1px solid #a3a3a3;"></div>
<svg style="left:271.5px;top:247px" width="8" height="5" viewBox="0 0 8 5"><path d="M0.300 0.200 H7.700 L4 4.200 Z" fill="#595959"/></svg>
<div class="t " style="left:287px;top:240.5px;font-size:13px;line-height:18px;color:#fff;font-weight:bold;letter-spacing:0.040px;">Qtd</div>
<div class="b" style="left:313px;top:240px;width:17px;height:17px;background:linear-gradient(#ffffff,#e6e8f0);border:1px solid #a3a3a3;"></div>
<svg style="left:317.5px;top:247px" width="8" height="5" viewBox="0 0 8 5"><path d="M0.300 0.200 H7.700 L4 4.200 Z" fill="#595959"/></svg>
<div class="t " style="left:333px;top:240.5px;font-size:13px;line-height:18px;color:#fff;font-weight:bold;letter-spacing:0.046px;">Preço Unitário</div>
<div class="b" style="left:426px;top:240px;width:17px;height:17px;background:linear-gradient(#ffffff,#e6e8f0);border:1px solid #a3a3a3;"></div>
<svg style="left:430.5px;top:247px" width="8" height="5" viewBox="0 0 8 5"><path d="M0.300 0.200 H7.700 L4 4.200 Z" fill="#595959"/></svg>
<div class="t " style="left:446.5px;top:240.5px;font-size:13px;line-height:18px;color:#fff;font-weight:bold;letter-spacing:-0.226px;">Desconto Final</div>
<div class="b" style="left:541px;top:240px;width:17px;height:17px;background:linear-gradient(#ffffff,#e6e8f0);border:1px solid #a3a3a3;"></div>
<svg style="left:545.5px;top:247px" width="8" height="5" viewBox="0 0 8 5"><path d="M0.300 0.200 H7.700 L4 4.200 Z" fill="#595959"/></svg>
<div class="t " style="left:561px;top:240.5px;font-size:13px;line-height:18px;color:#fff;font-weight:bold;letter-spacing:0.083px;">Total</div>
<div class="b" style="left:595px;top:240px;width:17px;height:17px;background:linear-gradient(#ffffff,#e6e8f0);border:1px solid #a3a3a3;"></div>
<svg style="left:599.5px;top:247px" width="8" height="5" viewBox="0 0 8 5"><path d="M0.300 0.200 H7.700 L4 4.200 Z" fill="#595959"/></svg>
<div class="t " style="left:615px;top:240.5px;font-size:13px;line-height:18px;color:#fff;font-weight:bold;letter-spacing:0.346px;">Vendedor</div>
<div class="b" style="left:680px;top:240px;width:17px;height:17px;background:linear-gradient(#ffffff,#e6e8f0);border:1px solid #a3a3a3;"></div>
<svg style="left:684.5px;top:247px" width="8" height="5" viewBox="0 0 8 5"><path d="M0.300 0.200 H7.700 L4 4.200 Z" fill="#595959"/></svg>
<div class="t " style="left:30.7px;top:260.5px;font-size:13px;line-height:18px;color:#000;letter-spacing:0.131px;">05/01/2022 00:00</div>
<div class="t " style="left:139.5px;top:260.5px;font-size:13px;line-height:18px;color:#000;letter-spacing:-0.790px;">PR031</div>
<div class="t " style="left:205px;top:260.5px;font-size:13px;line-height:18px;color:#000;letter-spacing:-0.028px;">Calçado</div>
<div class="t " style="left:320.8px;top:260.5px;font-size:13px;line-height:18px;color:#000;letter-spacing:-0.229px;">2</div>
<div class="t " style="left:419.8px;top:260.5px;font-size:13px;line-height:18px;color:#000;letter-spacing:-0.229px;">245</div>
<div class="t " style="left:538.1999999999999px;top:260.5px;font-size:13px;line-height:18px;color:#000;letter-spacing:-0.157px;">0,1</div>
<div class="t " style="left:588.8px;top:260.5px;font-size:13px;line-height:18px;color:#000;letter-spacing:-0.229px;">490</div>
<div class="t " style="left:615.3px;top:260.5px;font-size:13px;line-height:18px;color:#000;letter-spacing:-0.250px;">VD004</div>
<div class="t " style="left:30.7px;top:280.5px;font-size:13px;line-height:18px;color:#000;letter-spacing:0.131px;">06/01/2022 00:00</div>
<div class="t " style="left:139.5px;top:280.5px;font-size:13px;line-height:18px;color:#000;letter-spacing:-0.790px;">PR029</div>
<div class="t " style="left:205px;top:280.5px;font-size:13px;line-height:18px;color:#000;letter-spacing:-0.028px;">Calçado</div>
<div class="t " style="left:313.8px;top:280.5px;font-size:13px;line-height:18px;color:#000;letter-spacing:-0.229px;">10</div>
<div class="t " style="left:419.8px;top:280.5px;font-size:13px;line-height:18px;color:#000;letter-spacing:-0.229px;">255</div>
<div class="t " style="left:531.1999999999999px;top:280.5px;font-size:13px;line-height:18px;color:#000;letter-spacing:-0.175px;">0,15</div>
<div class="t " style="left:581.8px;top:280.5px;font-size:13px;line-height:18px;color:#000;letter-spacing:-0.229px;">2550</div>
<div class="t " style="left:615.3px;top:280.5px;font-size:13px;line-height:18px;color:#000;letter-spacing:-0.250px;">VD005</div>
<div class="t " style="left:30.7px;top:300.5px;font-size:13px;line-height:18px;color:#000;letter-spacing:0.131px;">07/01/2022 00:00</div>
<div class="t " style="left:139.5px;top:300.5px;font-size:13px;line-height:18px;color:#000;letter-spacing:-0.790px;">PR048</div>
<div class="t " style="left:205px;top:300.5px;font-size:13px;line-height:18px;color:#000;letter-spacing:0.589px;">Vestuário</div>
<div class="t " style="left:313.8px;top:300.5px;font-size:13px;line-height:18px;color:#000;letter-spacing:0.253px;">11</div>
<div class="t " style="left:409.2px;top:300.5px;font-size:13px;line-height:18px;color:#000;letter-spacing:-0.186px;">289,9</div>
<div class="t " style="left:538.1999999999999px;top:300.5px;font-size:13px;line-height:18px;color:#000;letter-spacing:-0.157px;">0,1</div>
<div class="t " style="left:571.1999999999999px;top:300.5px;font-size:13px;line-height:18px;color:#000;letter-spacing:-0.193px;">3188,9</div>
<div class="t " style="left:615.3px;top:300.5px;font-size:13px;line-height:18px;color:#000;letter-spacing:-0.250px;">VD003</div>
<div class="t " style="left:30.7px;top:320.5px;font-size:13px;line-height:18px;color:#000;letter-spacing:0.131px;">12/01/2022 00:00</div>
<div class="t " style="left:139.5px;top:320.5px;font-size:13px;line-height:18px;color:#000;letter-spacing:-0.790px;">PR058</div>
<div class="t " style="left:205px;top:320.5px;font-size:13px;line-height:18px;color:#000;letter-spacing:0.589px;">Vestuário</div>
<div class="t " style="left:313.8px;top:320.5px;font-size:13px;line-height:18px;color:#000;letter-spacing:0.253px;">11</div>
<div class="t " style="left:419.8px;top:320.5px;font-size:13px;line-height:18px;color:#000;letter-spacing:-0.229px;">180</div>
<div class="t " style="left:538.1999999999999px;top:320.5px;font-size:13px;line-height:18px;color:#000;letter-spacing:-0.157px;">0,2</div>
<div class="t " style="left:581.8px;top:320.5px;font-size:13px;line-height:18px;color:#000;letter-spacing:-0.229px;">1980</div>
<div class="t " style="left:615.3px;top:320.5px;font-size:13px;line-height:18px;color:#000;letter-spacing:-0.250px;">VD001</div>
<div class="t " style="left:30.7px;top:340.5px;font-size:13px;line-height:18px;color:#000;letter-spacing:0.131px;">13/01/2022 00:00</div>
<div class="t " style="left:139.5px;top:340.5px;font-size:13px;line-height:18px;color:#000;letter-spacing:-0.790px;">PR060</div>
<div class="t " style="left:205px;top:340.5px;font-size:13px;line-height:18px;color:#000;letter-spacing:0.589px;">Vestuário</div>
<div class="t " style="left:313.8px;top:340.5px;font-size:13px;line-height:18px;color:#000;letter-spacing:-0.229px;">10</div>
<div class="t " style="left:419.8px;top:340.5px;font-size:13px;line-height:18px;color:#000;letter-spacing:-0.229px;">180</div>
<div class="t " style="left:538.1999999999999px;top:340.5px;font-size:13px;line-height:18px;color:#000;letter-spacing:-0.157px;">0,1</div>
<div class="t " style="left:581.8px;top:340.5px;font-size:13px;line-height:18px;color:#000;letter-spacing:-0.229px;">1800</div>
<div class="t " style="left:615.3px;top:340.5px;font-size:13px;line-height:18px;color:#000;letter-spacing:-0.250px;">VD003</div>
<div class="t " style="left:30.7px;top:360.5px;font-size:13px;line-height:18px;color:#000;letter-spacing:0.131px;">17/01/2022 00:00</div>
<div class="t " style="left:139.5px;top:360.5px;font-size:13px;line-height:18px;color:#000;letter-spacing:-0.790px;">PR003</div>
<div class="t " style="left:205px;top:360.5px;font-size:13px;line-height:18px;color:#000;letter-spacing:0.589px;">Vestuário</div>
<div class="t " style="left:320.8px;top:360.5px;font-size:13px;line-height:18px;color:#000;letter-spacing:-0.229px;">8</div>
<div class="t " style="left:416.2px;top:360.5px;font-size:13px;line-height:18px;color:#000;letter-spacing:-0.175px;">70,9</div>
<div class="t " style="left:531.1999999999999px;top:360.5px;font-size:13px;line-height:18px;color:#000;letter-spacing:-0.175px;">0,15</div>
<div class="t " style="left:578.1999999999999px;top:360.5px;font-size:13px;line-height:18px;color:#000;letter-spacing:-0.186px;">567,2</div>
<div class="t " style="left:615.3px;top:360.5px;font-size:13px;line-height:18px;color:#000;letter-spacing:-0.250px;">VD002</div>
<div class="t " style="left:30.7px;top:380.5px;font-size:13px;line-height:18px;color:#000;letter-spacing:0.131px;">23/01/2022 00:00</div>
<div class="t " style="left:139.5px;top:380.5px;font-size:13px;line-height:18px;color:#000;letter-spacing:-0.790px;">PR029</div>
<div class="t " style="left:205px;top:380.5px;font-size:13px;line-height:18px;color:#000;letter-spacing:-0.028px;">Calçado</div>
<div class="t " style="left:320.8px;top:380.5px;font-size:13px;line-height:18px;color:#000;letter-spacing:-0.229px;">2</div>
<div class="t " style="left:419.8px;top:380.5px;font-size:13px;line-height:18px;color:#000;letter-spacing:-0.229px;">255</div>
<div class="t " style="left:538.1999999999999px;top:380.5px;font-size:13px;line-height:18px;color:#000;letter-spacing:-0.157px;">0,1</div>
<div class="t " style="left:588.8px;top:380.5px;font-size:13px;line-height:18px;color:#000;letter-spacing:-0.229px;">510</div>
<div class="t " style="left:615.3px;top:380.5px;font-size:13px;line-height:18px;color:#000;letter-spacing:-0.250px;">VD004</div>
<div class="t " style="left:30.7px;top:400.5px;font-size:13px;line-height:18px;color:#000;letter-spacing:0.131px;">26/01/2022 00:00</div>
<div class="t " style="left:139.5px;top:400.5px;font-size:13px;line-height:18px;color:#000;letter-spacing:-0.790px;">PR044</div>
<div class="t " style="left:205px;top:400.5px;font-size:13px;line-height:18px;color:#000;letter-spacing:0.589px;">Vestuário</div>
<div class="t " style="left:320.8px;top:400.5px;font-size:13px;line-height:18px;color:#000;letter-spacing:-0.229px;">2</div>
<div class="t " style="left:416.2px;top:400.5px;font-size:13px;line-height:18px;color:#000;letter-spacing:-0.175px;">72,5</div>
<div class="t " style="left:531.1999999999999px;top:400.5px;font-size:13px;line-height:18px;color:#000;letter-spacing:-0.175px;">0,15</div>
<div class="t " style="left:588.8px;top:400.5px;font-size:13px;line-height:18px;color:#000;letter-spacing:-0.229px;">145</div>
<div class="t " style="left:615.3px;top:400.5px;font-size:13px;line-height:18px;color:#000;letter-spacing:-0.250px;">VD005</div>
<div class="t " style="left:30.7px;top:420.5px;font-size:13px;line-height:18px;color:#000;letter-spacing:0.131px;">28/01/2022 00:00</div>
<div class="t " style="left:139.5px;top:420.5px;font-size:13px;line-height:18px;color:#000;letter-spacing:-0.790px;">PR046</div>
<div class="t " style="left:205px;top:420.5px;font-size:13px;line-height:18px;color:#000;letter-spacing:0.589px;">Vestuário</div>
<div class="t " style="left:313.8px;top:420.5px;font-size:13px;line-height:18px;color:#000;letter-spacing:-0.229px;">12</div>
<div class="t " style="left:409.2px;top:420.5px;font-size:13px;line-height:18px;color:#000;letter-spacing:-0.186px;">289,9</div>
<div class="t " style="left:538.1999999999999px;top:420.5px;font-size:13px;line-height:18px;color:#000;letter-spacing:-0.157px;">0,2</div>
<div class="t " style="left:571.1999999999999px;top:420.5px;font-size:13px;line-height:18px;color:#000;letter-spacing:-0.193px;">3478,8</div>
<div class="t " style="left:615.3px;top:420.5px;font-size:13px;line-height:18px;color:#000;letter-spacing:-0.250px;">VD004</div>
<div class="t " style="left:30.7px;top:440.5px;font-size:13px;line-height:18px;color:#000;letter-spacing:0.131px;">29/01/2022 00:00</div>
<div class="t " style="left:139.5px;top:440.5px;font-size:13px;line-height:18px;color:#000;letter-spacing:-0.790px;">PR046</div>
<div class="t " style="left:205px;top:440.5px;font-size:13px;line-height:18px;color:#000;letter-spacing:0.589px;">Vestuário</div>
<div class="t " style="left:320.8px;top:440.5px;font-size:13px;line-height:18px;color:#000;letter-spacing:-0.229px;">1</div>
<div class="t " style="left:409.2px;top:440.5px;font-size:13px;line-height:18px;color:#000;letter-spacing:-0.186px;">289,9</div>
<div class="t " style="left:538.1999999999999px;top:440.5px;font-size:13px;line-height:18px;color:#000;letter-spacing:-0.157px;">0,1</div>
<div class="t " style="left:578.1999999999999px;top:440.5px;font-size:13px;line-height:18px;color:#000;letter-spacing:-0.186px;">289,9</div>
<div class="t " style="left:615.3px;top:440.5px;font-size:13px;line-height:18px;color:#000;letter-spacing:-0.250px;">VD005</div>
<div class="t " style="left:30.7px;top:460.5px;font-size:13px;line-height:18px;color:#000;letter-spacing:0.131px;">30/01/2022 00:00</div>
<div class="t " style="left:139.5px;top:460.5px;font-size:13px;line-height:18px;color:#000;letter-spacing:-0.790px;">PR059</div>
<div class="t " style="left:205px;top:460.5px;font-size:13px;line-height:18px;color:#000;letter-spacing:0.589px;">Vestuário</div>
<div class="t " style="left:313.8px;top:460.5px;font-size:13px;line-height:18px;color:#000;letter-spacing:0.253px;">11</div>
<div class="t " style="left:419.8px;top:460.5px;font-size:13px;line-height:18px;color:#000;letter-spacing:-0.229px;">180</div>
<div class="t " style="left:538.1999999999999px;top:460.5px;font-size:13px;line-height:18px;color:#000;letter-spacing:-0.157px;">0,2</div>
<div class="t " style="left:581.8px;top:460.5px;font-size:13px;line-height:18px;color:#000;letter-spacing:-0.229px;">1980</div>
<div class="t " style="left:615.3px;top:460.5px;font-size:13px;line-height:18px;color:#000;letter-spacing:-0.250px;">VD001</div>
<div class="t " style="left:30.7px;top:480.5px;font-size:13px;line-height:18px;color:#000;letter-spacing:0.131px;">03/02/2022 00:00</div>
<div class="t " style="left:139.5px;top:480.5px;font-size:13px;line-height:18px;color:#000;letter-spacing:-0.790px;">PR003</div>
<div class="t " style="left:205px;top:480.5px;font-size:13px;line-height:18px;color:#000;letter-spacing:0.589px;">Vestuário</div>
<div class="t " style="left:320.8px;top:480.5px;font-size:13px;line-height:18px;color:#000;letter-spacing:-0.229px;">2</div>
<div class="t " style="left:416.2px;top:480.5px;font-size:13px;line-height:18px;color:#000;letter-spacing:-0.175px;">70,9</div>
<div class="t " style="left:531.1999999999999px;top:480.5px;font-size:13px;line-height:18px;color:#000;letter-spacing:-0.175px;">0,15</div>
<div class="t " style="left:578.1999999999999px;top:480.5px;font-size:13px;line-height:18px;color:#000;letter-spacing:-0.186px;">141,8</div>
<div class="t " style="left:615.3px;top:480.5px;font-size:13px;line-height:18px;color:#000;letter-spacing:-0.250px;">VD001</div>
<div class="t " style="left:30.7px;top:500.5px;font-size:13px;line-height:18px;color:#000;letter-spacing:0.131px;">05/02/2022 00:00</div>
<div class="t " style="left:139.5px;top:500.5px;font-size:13px;line-height:18px;color:#000;letter-spacing:-0.790px;">PR027</div>
<div class="t " style="left:205px;top:500.5px;font-size:13px;line-height:18px;color:#000;letter-spacing:0.262px;">Acessórios</div>
<div class="t " style="left:320.8px;top:500.5px;font-size:13px;line-height:18px;color:#000;letter-spacing:-0.229px;">7</div>
<div class="t " style="left:419.8px;top:500.5px;font-size:13px;line-height:18px;color:#000;letter-spacing:-0.229px;">120</div>
<div class="t " style="left:538.1999999999999px;top:500.5px;font-size:13px;line-height:18px;color:#000;letter-spacing:-0.157px;">0,2</div>
<div class="t " style="left:588.8px;top:500.5px;font-size:13px;line-height:18px;color:#000;letter-spacing:-0.229px;">840</div>
<div class="t " style="left:615.3px;top:500.5px;font-size:13px;line-height:18px;color:#000;letter-spacing:-0.250px;">VD004</div>
<div class="t " style="left:30.7px;top:520.5px;font-size:13px;line-height:18px;color:#000;letter-spacing:0.131px;">18/02/2022 00:00</div>
<div class="t " style="left:139.5px;top:520.5px;font-size:13px;line-height:18px;color:#000;letter-spacing:-0.790px;">PR023</div>
<div class="t " style="left:205px;top:520.5px;font-size:13px;line-height:18px;color:#000;letter-spacing:0.589px;">Vestuário</div>
<div class="t " style="left:320.8px;top:520.5px;font-size:13px;line-height:18px;color:#000;letter-spacing:-0.229px;">4</div>
<div class="t " style="left:409.2px;top:520.5px;font-size:13px;line-height:18px;color:#000;letter-spacing:-0.186px;">249,9</div>
<div class="t " style="left:538.1999999999999px;top:520.5px;font-size:13px;line-height:18px;color:#000;letter-spacing:-0.157px;">0,2</div>
<div class="t " style="left:578.1999999999999px;top:520.5px;font-size:13px;line-height:18px;color:#000;letter-spacing:-0.186px;">999,6</div>
<div class="t " style="left:615.3px;top:520.5px;font-size:13px;line-height:18px;color:#000;letter-spacing:-0.250px;">VD001</div>
<div class="t " style="left:30.7px;top:540.5px;font-size:13px;line-height:18px;color:#000;letter-spacing:0.131px;">21/02/2022 00:00</div>
<div class="t " style="left:139.5px;top:540.5px;font-size:13px;line-height:18px;color:#000;letter-spacing:-0.790px;">PR014</div>
<div class="t " style="left:205px;top:540.5px;font-size:13px;line-height:18px;color:#000;letter-spacing:0.589px;">Vestuário</div>
<div class="t " style="left:320.8px;top:540.5px;font-size:13px;line-height:18px;color:#000;letter-spacing:-0.229px;">4</div>
<div class="t " style="left:416.2px;top:540.5px;font-size:13px;line-height:18px;color:#000;letter-spacing:-0.175px;">39,9</div>
<div class="t " style="left:538.1999999999999px;top:540.5px;font-size:13px;line-height:18px;color:#000;letter-spacing:-0.157px;">0,1</div>
<div class="t " style="left:578.1999999999999px;top:540.5px;font-size:13px;line-height:18px;color:#000;letter-spacing:-0.186px;">159,6</div>
<div class="t " style="left:615.3px;top:540.5px;font-size:13px;line-height:18px;color:#000;letter-spacing:-0.250px;">VD003</div>
<div class="t " style="left:30.7px;top:560.5px;font-size:13px;line-height:18px;color:#000;letter-spacing:0.131px;">24/02/2022 00:00</div>
<div class="t " style="left:139.5px;top:560.5px;font-size:13px;line-height:18px;color:#000;letter-spacing:-0.790px;">PR040</div>
<div class="t " style="left:205px;top:560.5px;font-size:13px;line-height:18px;color:#000;letter-spacing:0.589px;">Vestuário</div>
<div class="t " style="left:313.8px;top:560.5px;font-size:13px;line-height:18px;color:#000;letter-spacing:-0.229px;">10</div>
<div class="t " style="left:426.8px;top:560.5px;font-size:13px;line-height:18px;color:#000;letter-spacing:-0.229px;">70</div>
<div class="t " style="left:531.1999999999999px;top:560.5px;font-size:13px;line-height:18px;color:#000;letter-spacing:-0.175px;">0,15</div>
<div class="t " style="left:588.8px;top:560.5px;font-size:13px;line-height:18px;color:#000;letter-spacing:-0.229px;">700</div>
<div class="t " style="left:615.3px;top:560.5px;font-size:13px;line-height:18px;color:#000;letter-spacing:-0.250px;">VD005</div>
<div class="t " style="left:30.7px;top:580.5px;font-size:13px;line-height:18px;color:#000;letter-spacing:0.131px;">25/02/2022 00:00</div>
<div class="t " style="left:139.5px;top:580.5px;font-size:13px;line-height:18px;color:#000;letter-spacing:-0.790px;">PR009</div>
<div class="t " style="left:205px;top:580.5px;font-size:13px;line-height:18px;color:#000;letter-spacing:0.589px;">Vestuário</div>
<div class="t " style="left:320.8px;top:580.5px;font-size:13px;line-height:18px;color:#000;letter-spacing:-0.229px;">5</div>
<div class="t " style="left:416.2px;top:580.5px;font-size:13px;line-height:18px;color:#000;letter-spacing:-0.175px;">92,9</div>
<div class="t " style="left:531.1999999999999px;top:580.5px;font-size:13px;line-height:18px;color:#000;letter-spacing:-0.175px;">0,15</div>
<div class="t " style="left:578.1999999999999px;top:580.5px;font-size:13px;line-height:18px;color:#000;letter-spacing:-0.186px;">464,5</div>
<div class="t " style="left:615.3px;top:580.5px;font-size:13px;line-height:18px;color:#000;letter-spacing:-0.250px;">VD005</div>
<div class="t " style="left:30.7px;top:600.5px;font-size:13px;line-height:18px;color:#000;letter-spacing:0.131px;">26/02/2022 00:00</div>
<div class="t " style="left:139.5px;top:600.5px;font-size:13px;line-height:18px;color:#000;letter-spacing:-0.790px;">PR022</div>
<div class="t " style="left:205px;top:600.5px;font-size:13px;line-height:18px;color:#000;letter-spacing:0.589px;">Vestuário</div>
<div class="t " style="left:320.8px;top:600.5px;font-size:13px;line-height:18px;color:#000;letter-spacing:-0.229px;">2</div>
<div class="t " style="left:419.8px;top:600.5px;font-size:13px;line-height:18px;color:#000;letter-spacing:-0.229px;">300</div>
<div class="t " style="left:531.1999999999999px;top:600.5px;font-size:13px;line-height:18px;color:#000;letter-spacing:-0.175px;">0,15</div>
<div class="t " style="left:588.8px;top:600.5px;font-size:13px;line-height:18px;color:#000;letter-spacing:-0.229px;">600</div>
<div class="t " style="left:615.3px;top:600.5px;font-size:13px;line-height:18px;color:#000;letter-spacing:-0.250px;">VD001</div>
<div class="t " style="left:30.7px;top:620.5px;font-size:13px;line-height:18px;color:#000;letter-spacing:0.131px;">01/03/2022 00:00</div>
<div class="t " style="left:139.5px;top:620.5px;font-size:13px;line-height:18px;color:#000;letter-spacing:-0.790px;">PR001</div>
<div class="t " style="left:205px;top:620.5px;font-size:13px;line-height:18px;color:#000;letter-spacing:0.589px;">Vestuário</div>
<div class="t " style="left:320.8px;top:620.5px;font-size:13px;line-height:18px;color:#000;letter-spacing:-0.229px;">5</div>
<div class="t " style="left:416.2px;top:620.5px;font-size:13px;line-height:18px;color:#000;letter-spacing:-0.175px;">65,9</div>
<div class="t " style="left:538.1999999999999px;top:620.5px;font-size:13px;line-height:18px;color:#000;letter-spacing:-0.157px;">0,2</div>
<div class="t " style="left:578.1999999999999px;top:620.5px;font-size:13px;line-height:18px;color:#000;letter-spacing:-0.186px;">329,5</div>
<div class="t " style="left:615.3px;top:620.5px;font-size:13px;line-height:18px;color:#000;letter-spacing:-0.250px;">VD001</div>
<div class="t " style="left:30.7px;top:640.5px;font-size:13px;line-height:18px;color:#000;letter-spacing:0.131px;">01/03/2022 00:00</div>
<div class="t " style="left:139.5px;top:640.5px;font-size:13px;line-height:18px;color:#000;letter-spacing:-0.790px;">PR013</div>
<div class="t " style="left:205px;top:640.5px;font-size:13px;line-height:18px;color:#000;letter-spacing:0.589px;">Vestuário</div>
<div class="t " style="left:320.8px;top:640.5px;font-size:13px;line-height:18px;color:#000;letter-spacing:-0.229px;">3</div>
<div class="t " style="left:416.2px;top:640.5px;font-size:13px;line-height:18px;color:#000;letter-spacing:-0.175px;">39,9</div>
<div class="t " style="left:538.1999999999999px;top:640.5px;font-size:13px;line-height:18px;color:#000;letter-spacing:-0.157px;">0,2</div>
<div class="t " style="left:578.1999999999999px;top:640.5px;font-size:13px;line-height:18px;color:#000;letter-spacing:0.007px;">119,7</div>
<div class="t " style="left:615.3px;top:640.5px;font-size:13px;line-height:18px;color:#000;letter-spacing:-0.250px;">VD004</div>
<div class="t " style="left:30.7px;top:660.5px;font-size:13px;line-height:18px;color:#000;letter-spacing:0.131px;">02/03/2022 00:00</div>
<div class="t " style="left:139.5px;top:660.5px;font-size:13px;line-height:18px;color:#000;letter-spacing:-0.790px;">PR013</div>
<div class="t " style="left:205px;top:660.5px;font-size:13px;line-height:18px;color:#000;letter-spacing:0.589px;">Vestuário</div>
<div class="t " style="left:320.8px;top:660.5px;font-size:13px;line-height:18px;color:#000;letter-spacing:-0.229px;">1</div>
<div class="t " style="left:416.2px;top:660.5px;font-size:13px;line-height:18px;color:#000;letter-spacing:-0.175px;">39,9</div>
<div class="t " style="left:538.1999999999999px;top:660.5px;font-size:13px;line-height:18px;color:#000;letter-spacing:-0.157px;">0,1</div>
<div class="t " style="left:585.1999999999999px;top:660.5px;font-size:13px;line-height:18px;color:#000;letter-spacing:-0.175px;">39,9</div>
<div class="t " style="left:615.3px;top:660.5px;font-size:13px;line-height:18px;color:#000;letter-spacing:-0.250px;">VD004</div>
<div class="b" style="left:24px;top:237px;width:114px;height:2px;background:#107c41;"></div>
<div class="b" style="left:24px;top:237px;width:2px;height:23px;background:#107c41;"></div>
<div class="b" style="left:136px;top:237px;width:2px;height:20px;background:#107c41;"></div>
<div class="b" style="left:24px;top:258px;width:111px;height:2px;background:#107c41;"></div>
<div class="b" style="left:26px;top:239px;width:110px;height:1px;background:#fff;"></div>
<div class="b" style="left:26px;top:239px;width:1px;height:19px;background:#fff;"></div>
<div class="b" style="left:26px;top:257px;width:108px;height:1px;background:#fff;"></div>
<div class="b" style="left:135px;top:239px;width:1px;height:17px;background:#fff;"></div>
<div class="b" style="left:134px;top:256px;width:5px;height:5px;background:#107c41;border-left:1px solid #fff;border-top:1px solid #fff;"></div>
<div class="b" style="left:994px;top:219px;width:23px;height:459px;background:#f0f0f0;"></div>
<div class="b" style="left:997px;top:221px;width:17px;height:450px;background:#f7f7f7;border-radius:8px 8px 0 0;"></div>
<svg style="left:1001px;top:224px" width="9" height="7" viewBox="0 0 9 7"><path d="M4.500 0.300 L8.800 6.200 Q9 6.800 8.300 6.800 H0.700 Q0 6.800 0.200 6.200 Z" fill="#737373"/></svg>
<div class="b" style="left:1001px;top:236px;width:9px;height:34px;background:#737373;border-radius:4.5px;"></div>
<div class="b" style="left:1016px;top:221px;width:1px;height:483px;background:#d4d4d4;"></div>
<div class="t " style="left:1030px;top:233.0px;font-size:15px;line-height:20px;color:#242424;letter-spacing:-0.171px;">Consultas e Conexões</div>
<svg style="left:1302px;top:237px" width="15" height="10" viewBox="0 0 15 10"><path d="M1 2 L7.500 8.500 L14 2" fill="none" stroke="#333" stroke-width="1.1"/></svg>
<svg style="left:1336px;top:236px" width="12" height="12" viewBox="0 0 12 12"><path d="M1 1 L11 11 M11 1 L1 11" stroke="#333" stroke-width="1.1"/></svg>
<div class="b" style="left:1030px;top:261px;width:322px;height:431px;background:#fff;"></div>
<div class="t " style="left:1030px;top:267.24px;font-size:12px;line-height:16px;color:#242424;letter-spacing:-0.040px;text-shadow:0.35px 0 0 #242424;">Consultas</div>
<div class="b" style="left:1030px;top:286px;width:53px;height:3px;background:#107c41;"></div>
<div class="b" style="left:1091px;top:265px;width:1px;height:18px;background:#c8c8c8;"></div>
<div class="t " style="left:1100.5px;top:267.24px;font-size:12px;line-height:16px;color:#242424;letter-spacing:-0.254px;">Conexões</div>
<div class="t " style="left:1030px;top:298.09px;font-size:11px;line-height:15px;color:#333;letter-spacing:-0.104px;">2 consultas</div>
<div class="b" style="left:1030px;top:314px;width:322px;height:1px;background:#ababab;"></div>
<svg style="left:1035px;top:330px" width="13" height="12" viewBox="0 0 14 12" preserveAspectRatio="none">
<rect x="0.5" y="0.5" width="13" height="11" fill="#fff" stroke="#6a6a6a"/>
<rect x="0.5" y="0.5" width="13" height="3" fill="#3b6fc4" stroke="#3b6fc4"/>
<path d="M0.500 6 H13.500 M0.500 9 H13.500 M5 3.500 V11.500 M9 3.500 V11.500" stroke="#8a8a8a" stroke-width="0.9"/></svg>
<div class="t " style="left:1054.5px;top:326.8px;font-size:15px;line-height:20px;color:#616161;letter-spacing:-0.674px;">Vendas</div>
<div class="t " style="left:1054.5px;top:351.17px;font-size:12.5px;line-height:17px;color:#333;letter-spacing:-0.021px;">252 linhas carregadas.</div>
<div class="b" style="left:1030px;top:373px;width:322px;height:50px;background:#9fd5b7;"></div>
<svg style="left:1035px;top:380px" width="13" height="12" viewBox="0 0 14 12" preserveAspectRatio="none">
<rect x="0.5" y="0.5" width="13" height="11" fill="#fff" stroke="#6a6a6a"/>
<rect x="0.5" y="0.5" width="13" height="3" fill="#3b5a8a" stroke="#3b5a8a"/>
<path d="M0.500 6 H13.500 M0.500 9 H13.500 M5 3.500 V11.500 M9 3.500 V11.500" stroke="#8a8a8a" stroke-width="0.9"/></svg>
<div class="t " style="left:1054.5px;top:376.8px;font-size:15px;line-height:20px;color:#616161;letter-spacing:-0.980px;">TB_Vendas_Hist</div>
<div class="t " style="left:1054.5px;top:401.17px;font-size:12.5px;line-height:17px;color:#333;letter-spacing:-0.021px;">252 linhas carregadas.</div>
<svg style="left:1335px;top:378px" width="15" height="16" viewBox="0 0 15 16">
<path d="M0.600 0.600 H7.500 L11.500 4.600 V14.400 H0.600 Z" fill="#fff" stroke="#555" stroke-width="1"/>
<path d="M7.500 0.600 V4.600 H11.500" fill="none" stroke="#555" stroke-width="1"/>
<circle cx="10.500" cy="11.500" r="3.600" fill="#9fd5b7"/>
<path d="M13.200 10.500 A3 3 0 0 0 7.800 10 M7.600 8.300 V10.300 H9.600 M7.800 12.500 A3 3 0 0 0 13.200 13 M13.400 14.700 V12.700 H11.400" fill="none" stroke="#5fae82" stroke-width="1.100"/></svg>
<div class="b" style="left:0px;top:674px;width:1016px;height:32px;background:#f0f0f0;"></div>
<div class="b" style="left:0px;top:674px;width:994px;height:1px;background:#dcdcdc;"></div>
<div class="b" style="left:997px;top:660px;width:17px;height:17px;background:#f7f7f7;border-radius:0 0 8px 8px;"></div>
<svg style="left:1001px;top:665px" width="9" height="7" viewBox="0 0 9 7"><path d="M4.500 6.700 L8.800 0.800 Q9 0.200 8.300 0.200 H0.700 Q0 0.200 0.200 0.800 Z" fill="#737373"/></svg>
<svg style="left:27px;top:684px" width="8" height="11" viewBox="0 0 8 11"><path d="M6.500 1 L2 5.500 L6.500 10" fill="none" stroke="#444" stroke-width="1.1"/></svg>
<svg style="left:60px;top:684px" width="8" height="11" viewBox="0 0 8 11"><path d="M1.500 1 L6 5.500 L1.500 10" fill="none" stroke="#444" stroke-width="1.1"/></svg>
<div class="b" style="left:90px;top:688px;width:2.5px;height:2.5px;background:#444;border-radius:50%;"></div>
<div class="b" style="left:94px;top:688px;width:2.5px;height:2.5px;background:#444;border-radius:50%;"></div>
<div class="b" style="left:98px;top:688px;width:2.5px;height:2.5px;background:#444;border-radius:50%;"></div>
<div class="t " style="left:126px;top:681.82px;font-size:13.5px;line-height:18px;color:#424242;letter-spacing:0.246px;">Produtos</div>
<div class="b" style="left:196px;top:681px;width:1px;height:18px;background:#d4d4d4;"></div>
<div class="t " style="left:211px;top:681.82px;font-size:13.5px;line-height:18px;color:#424242;letter-spacing:0.194px;">Vendedores</div>
<div class="b" style="left:299px;top:681px;width:1px;height:18px;background:#d4d4d4;"></div>
<div class="t " style="left:314px;top:681.82px;font-size:13.5px;line-height:18px;color:#424242;letter-spacing:0.077px;">Vendas</div>
<div class="b" style="left:372px;top:681px;width:1px;height:18px;background:#d4d4d4;"></div>
<div class="b" style="left:377px;top:674px;width:120px;height:28px;background:#fff;border-radius:0 0 5px 5px;box-shadow:0 0.5px 2px rgba(0,0,0,.22);"></div>
<div class="t " style="left:385px;top:678.5px;font-size:13px;line-height:18px;color:#242424;font-weight:bold;letter-spacing:0.081px;">TB_Vendas_Hist</div>
<div class="b" style="left:385px;top:697px;width:103px;height:2px;background:#107c41;border-radius:1px;"></div>
<div class="t " style="left:516px;top:681.82px;font-size:13.5px;line-height:18px;color:#424242;letter-spacing:0.215px;">Vendas histórico</div>
<div class="b" style="left:500px;top:681px;width:1px;height:18px;background:#d4d4d4;"></div>
<div class="b" style="left:640px;top:688px;width:2.5px;height:2.5px;background:#444;border-radius:50%;"></div>
<div class="b" style="left:644px;top:688px;width:2.5px;height:2.5px;background:#444;border-radius:50%;"></div>
<div class="b" style="left:648px;top:688px;width:2.5px;height:2.5px;background:#444;border-radius:50%;"></div>
<svg style="left:671px;top:684px" width="12" height="12" viewBox="0 0 12 12"><path d="M6 0.500 V11.500 M0.500 6 H11.500" stroke="#444" stroke-width="1.1"/></svg>
<div class="b" style="left:708.7px;top:684.5px;width:2.5px;height:2.5px;background:#222;border-radius:50%;"></div>
<div class="b" style="left:708.7px;top:688.7px;width:2.5px;height:2.5px;background:#222;border-radius:50%;"></div>
<div class="b" style="left:708.7px;top:692.9px;width:2.5px;height:2.5px;background:#222;border-radius:50%;"></div>
<div class="b" style="left:727px;top:682px;width:270px;height:17px;background:#f7f7f7;border-radius:8.500px;"></div>
<svg style="left:730px;top:685px" width="7" height="9" viewBox="0 0 7 9"><path d="M0.300 4.500 L6.200 0.200 Q6.800 0 6.800 0.700 V8.300 Q6.800 9 6.200 8.800 Z" fill="#737373"/></svg>
<div class="b" style="left:743px;top:685px;width:230px;height:9px;background:#737373;border-radius:4.500px;"></div>
<svg style="left:986px;top:685px" width="7" height="9" viewBox="0 0 7 9"><path d="M6.700 4.500 L0.800 0.200 Q0.200 0 0.200 0.700 V8.300 Q0.200 9 0.800 8.800 Z" fill="#737373"/></svg>
<div class="b" style="left:0px;top:706px;width:1366px;height:21px;background:#f5f5f5;border-top:1px solid #fdfdfd;"></div>
<div class="t " style="left:11.5px;top:709.52px;font-size:11.5px;line-height:16px;color:#333;letter-spacing:0.020px;">Pronto</div>
<svg style="left:66px;top:710px" width="15" height="13" viewBox="0 0 15 13">
<rect x="0.500" y="1.500" width="12" height="10" rx="1" fill="none" stroke="#444"/>
<path d="M0.500 4.500 H12.500 M3 7 H6 M3 9.500 H5" stroke="#444"/>
<circle cx="10" cy="8.500" r="3.200" fill="#f5f5f5" stroke="#444"/><circle cx="10" cy="8.500" r="1.200" fill="#444"/></svg>
<svg style="left:97px;top:709px" width="15" height="15" viewBox="0 0 15 15">
<circle cx="6.500" cy="2" r="1.500" fill="none" stroke="#444"/>
<path d="M1 4.500 L5 5.500 H8 L12 4.500 M5 5.500 V9 L3 14 M8 5.500 V9 L9 11" fill="none" stroke="#444" stroke-width="1.100"/>
<path d="M9.500 9.500 L14 14 M14 9.500 L9.500 14" stroke="#444" stroke-width="1.200"/></svg>
<div class="t " style="left:116.5px;top:709.52px;font-size:11.5px;line-height:16px;color:#333;letter-spacing:0.034px;text-shadow:0.35px 0 0 #333;">Acessibilidade: investigar</div>
<div class="b" style="left:1066px;top:707px;width:40px;height:20px;background:#dcdcdc;"></div>
<svg style="left:1079px;top:710px" width="14" height="13" viewBox="0 0 14 13">
<rect x="0.500" y="0.500" width="13" height="12" fill="none" stroke="#333"/><path d="M0.500 4.500 H13.500 M0.500 8.500 H13.500 M5 0.500 V12.500 M9 0.500 V12.500" stroke="#333"/></svg>
<svg style="left:1119px;top:710px" width="14" height="13" viewBox="0 0 14 13">
<rect x="0.500" y="0.500" width="13" height="12" rx="1" fill="none" stroke="#333"/><rect x="3.500" y="3.500" width="7" height="6" fill="none" stroke="#333"/><path d="M5 5.500 H9 M5 7.500 H9" stroke="#333" stroke-width="0.900"/></svg>
<svg style="left:1159px;top:710px" width="14" height="13" viewBox="0 0 14 13">
<rect x="0.500" y="0.500" width="13" height="12" fill="none" stroke="#333"/><path d="M4.500 0.500 V7.500 M9.500 0.500 V7.500 M0.500 7.500 H9.500" fill="none" stroke="#333"/></svg>
<div class="b" style="left:1192px;top:716px;width:8px;height:1px;background:#333;"></div>
<div class="b" style="left:1205px;top:717px;width:100px;height:1px;background:#707070;"></div>
<div class="b" style="left:1253px;top:712px;width:5px;height:11px;background:#666;"></div>
<div class="b" style="left:1310px;top:716px;width:9px;height:1px;background:#333;"></div>
<div class="b" style="left:1314px;top:712px;width:1px;height:9px;background:#333;"></div>
<div class="t " style="left:1331.5px;top:710.19px;font-size:11px;line-height:15px;color:#333;letter-spacing:-0.283px;">100%</div>
</body></html>
